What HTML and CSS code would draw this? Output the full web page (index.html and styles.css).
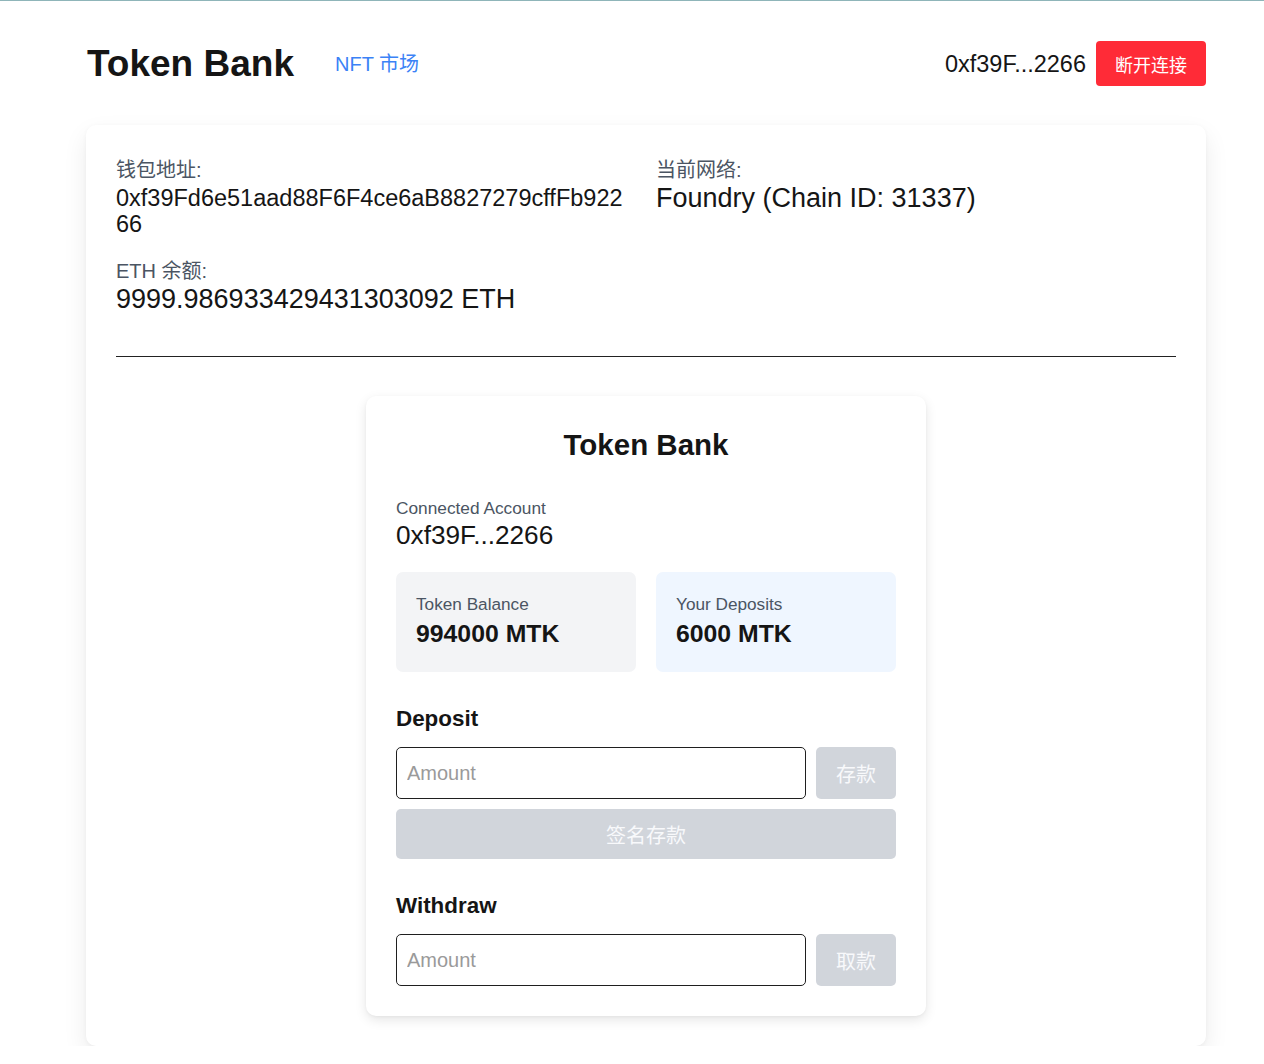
FILE: index.html
```html
<!DOCTYPE html>
<html lang="zh-CN">
<head>
<meta charset="utf-8">
<title>Token Bank</title>
<link rel="stylesheet" href="styles.css">
</head>
<body>
<div class="page">
  <header class="topbar">
    <div class="brand">
      <h1 class="logo">Token Bank</h1>
      <a class="nav-link" href="#">NFT 市场</a>
    </div>
    <div class="account">
      <span class="account-addr">0xf39F...2266</span>
      <button class="btn-disconnect">断开连接</button>
    </div>
  </header>

  <main class="card">
    <section class="info-grid">
      <div class="info-item">
        <div class="info-label">钱包地址:</div>
        <div class="info-value addr">0xf39Fd6e51aad88F6F4ce6aB8827279cffFb92266</div>
      </div>
      <div class="info-item">
        <div class="info-label">当前网络:</div>
        <div class="info-value big">Foundry (Chain ID: 31337)</div>
      </div>
      <div class="info-item">
        <div class="info-label">ETH 余额:</div>
        <div class="info-value big">9999.986933429431303092 ETH</div>
      </div>
    </section>

    <hr class="divider">

    <section class="bank-wrap">
      <div class="bank">
        <h2 class="bank-title">Token Bank</h2>
        <div class="conn">
          <div class="conn-label">Connected Account</div>
          <div class="conn-value">0xf39F...2266</div>
        </div>
        <div class="stats">
          <div class="stat stat-gray">
            <div class="stat-label">Token Balance</div>
            <div class="stat-value">994000 MTK</div>
          </div>
          <div class="stat stat-blue">
            <div class="stat-label">Your Deposits</div>
            <div class="stat-value">6000 MTK</div>
          </div>
        </div>

        <div class="op">
          <h3 class="op-title">Deposit</h3>
          <div class="op-row">
            <input class="amount" type="text" placeholder="Amount">
            <button class="btn-gray btn-small" disabled>存款</button>
          </div>
          <button class="btn-gray btn-wide" disabled>签名存款</button>
        </div>

        <div class="op">
          <h3 class="op-title">Withdraw</h3>
          <div class="op-row">
            <input class="amount" type="text" placeholder="Amount">
            <button class="btn-gray btn-small" disabled>取款</button>
          </div>
        </div>
      </div>
    </section>
  </main>
</div>
</body>
</html>
```

FILE: styles.css
```css
* { box-sizing: border-box; }

html, body {
  margin: 0;
  padding: 0;
}

body {
  background: #ffffff;
  border-top: 1px solid #8fb5b9;
  font-family: "Liberation Sans", "Noto Sans CJK SC", Arial, sans-serif;
  color: #151515;
}

.page {
  width: 1120px;
  margin: 0 58px 0 86px;
  padding-top: 40px;
}

/* Header */
.topbar {
  display: flex;
  align-items: center;
  justify-content: space-between;
  height: 45px;
}

.brand {
  display: flex;
  align-items: center;
}

.logo {
  margin: 0;
  font-size: 37px;
  line-height: 40px;
  font-weight: 700;
  color: #151515;
  padding-left: 1px;
}

.nav-link {
  margin-left: 41px;
  font-size: 20px;
  line-height: 28px;
  color: #3b82f6;
  text-decoration: none;
}

.account {
  display: flex;
  align-items: center;
  gap: 10px;
}

.account-addr {
  font-size: 23.5px;
  line-height: 30px;
  color: #151515;
}

.btn-disconnect {
  height: 45px;
  width: 110px;
  border: none;
  border-radius: 4px;
  background: #ff2b37;
  color: #ffffff;
  font-family: "Liberation Sans", "Noto Sans CJK SC", sans-serif;
  font-size: 18px;
  padding: 0;
  cursor: pointer;
}

/* Main card */
.card {
  margin-top: 39px;
  background: #ffffff;
  border-radius: 10px;
  padding: 30px;
  box-shadow: 0 10px 24px rgba(0, 0, 0, 0.08), 0 1px 4px rgba(0, 0, 0, 0.04);
}

.info-grid {
  display: grid;
  grid-template-columns: 1fr 1fr;
  column-gap: 20px;
  row-gap: 19px;
}

.info-label {
  font-size: 20px;
  line-height: 30px;
  color: #4b5563;
}

.info-value {
  color: #151515;
}

.info-value.addr {
  font-size: 23.5px;
  line-height: 26px;
  word-break: break-all;
  padding-right: 8px;
}

.info-value.big {
  font-size: 27px;
  line-height: 26px;
}

.divider {
  margin: 44px 0 0;
  border: none;
  border-top: 1px solid #222;
  height: 0;
}

/* Bank panel */
.bank-wrap {
  display: flex;
  justify-content: center;
  padding-top: 39px;
}

.bank {
  width: 560px;
  background: #ffffff;
  border-radius: 10px;
  padding: 30px;
  box-shadow: 0 4px 12px rgba(0, 0, 0, 0.1), 0 1px 3px rgba(0, 0, 0, 0.04);
}

.bank-title {
  margin: 0;
  text-align: center;
  font-size: 29.5px;
  line-height: 38px;
  font-weight: 700;
  color: #151515;
}

.conn {
  margin-top: 32px;
}

.conn-label {
  font-size: 17.3px;
  line-height: 24px;
  color: #4b5563;
}

.conn-value {
  font-size: 26.2px;
  line-height: 30px;
  color: #151515;
}

.stats {
  margin-top: 22px;
  display: grid;
  grid-template-columns: 1fr 1fr;
  gap: 20px;
}

.stat {
  height: 100px;
  border-radius: 7px;
  padding: 20px;
}

.stat-gray { background: #f3f4f6; }
.stat-blue { background: #eff6ff; }

.stat-label {
  font-size: 17.2px;
  line-height: 24px;
  color: #4b5563;
}

.stat-value {
  font-size: 24.8px;
  line-height: 36px;
  font-weight: 700;
  color: #151515;
}

.op {
  margin-top: 32px;
}

.op-title {
  margin: 0 0 13px;
  font-size: 22.4px;
  line-height: 30px;
  font-weight: 700;
  color: #151515;
}

.op-row {
  display: flex;
  gap: 10px;
}

.amount {
  flex: 1;
  min-width: 0;
  height: 52px;
  border: 1px solid #1f1f1f;
  border-radius: 5px;
  padding: 0 10px;
  font-family: "Liberation Sans", "Noto Sans CJK SC", sans-serif;
  font-size: 20px;
  color: #151515;
  outline: none;
}

.amount::placeholder {
  color: #9a9a9a;
}

.btn-gray {
  border: none;
  border-radius: 5px;
  background: #d1d5db;
  color: #f8f9fb;
  font-family: "Liberation Sans", "Noto Sans CJK SC", sans-serif;
  font-size: 20px;
  padding: 0;
}

.btn-small {
  width: 80px;
  height: 52px;
}

.btn-wide {
  display: block;
  width: 100%;
  height: 50px;
  margin-top: 10px;
}
```
